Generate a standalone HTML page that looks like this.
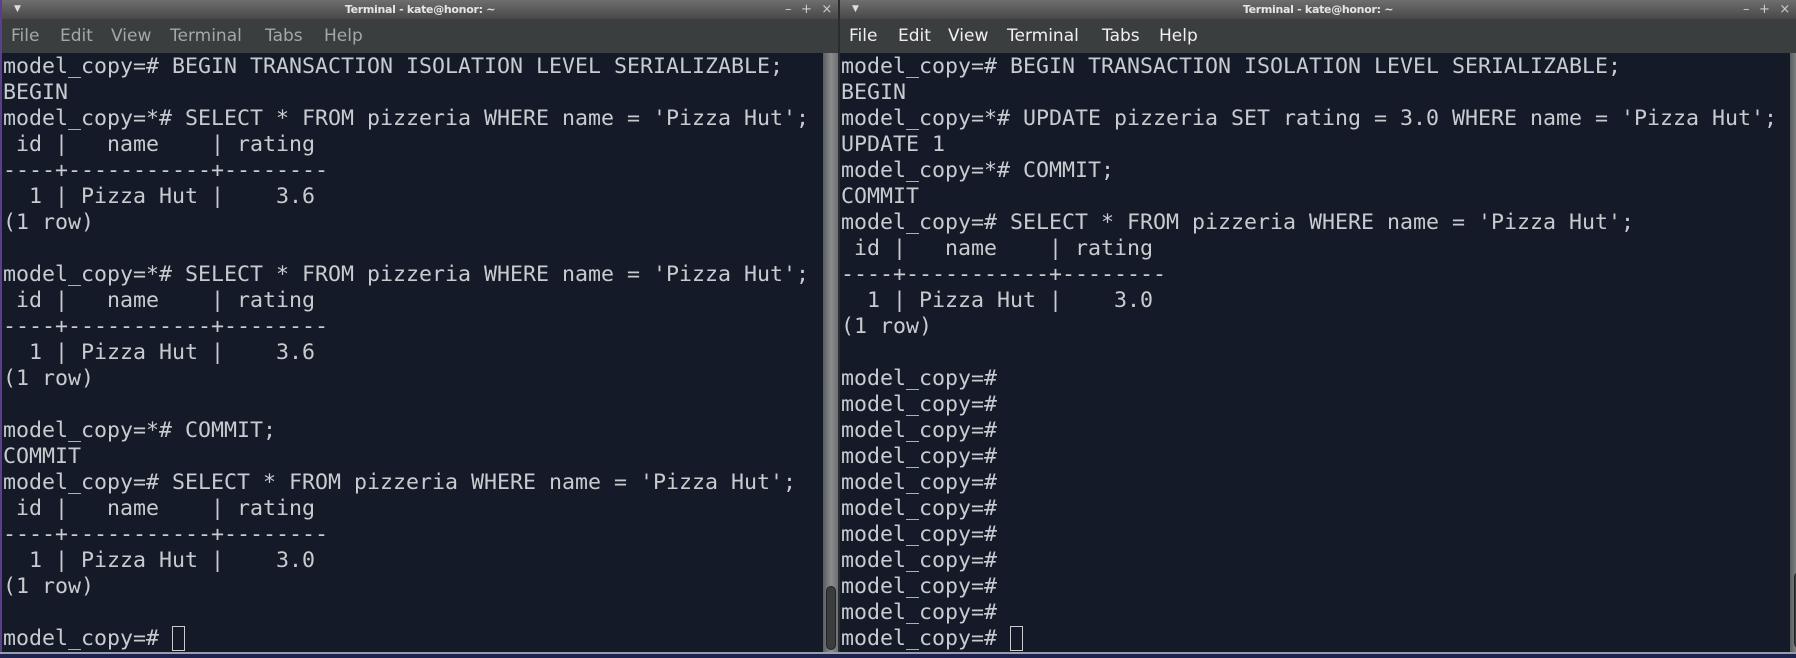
<!DOCTYPE html>
<html><head><meta charset="utf-8"><style>
*{margin:0;padding:0;box-sizing:border-box}
body{width:1796px;height:658px;overflow:hidden;background:#1c2350;position:relative;font-family:"DejaVu Sans","Liberation Sans",sans-serif}
.win{position:absolute;top:0;height:652px;background:#141a27;overflow:hidden}
.title{position:absolute;left:0;right:0;top:0;height:19px;background:linear-gradient(#6e6e6e,#484848);color:#e6e6e6;font-size:11px;font-weight:bold;text-align:center;line-height:19px;letter-spacing:-0.3px}
.title .arr{position:absolute;left:12px;top:0;font-size:9px;color:#ddd}
.title .btns{position:absolute;right:6px;top:0;font-size:13px;font-weight:normal;color:#ccc;word-spacing:6px}
.menu{position:absolute;left:0;right:0;top:19px;height:34px;background:#3b3e3f;font-size:17px;line-height:34px}
.menu span{position:absolute;top:0}
.term{position:absolute;top:54px;font-family:"DejaVu Sans Mono","Liberation Mono",monospace;font-size:21.6px;line-height:26px;color:#c8ccd0;white-space:pre}
.cur{display:inline-block;width:13px;height:25px;border:1.5px solid #c8ccd0;vertical-align:top;margin-top:0}
.sb{position:absolute;top:53px;bottom:0;width:16px;background:linear-gradient(90deg,#5a5d5e,#8a8c8d,#6a6c6d)}
.thumb{position:absolute;width:10px;background:#3a3d3e;border:1px solid #222;border-radius:5px}
</style></head><body>
<div class="win" style="left:0;width:838px;border-left:2px solid #5a3f8a">
 <div class="title"><span class="arr">▼</span>Terminal - kate@honor: ~<span class="btns">– + ×</span></div>
 <div class="menu" style="color:#a4a8aa"><span style="left:9px">File</span><span style="left:58px">Edit</span><span style="left:109px">View</span><span style="left:168px">Terminal</span><span style="left:263px">Tabs</span><span style="left:322px">Help</span></div>
 <div class="term" style="left:1px">model_copy=# BEGIN TRANSACTION ISOLATION LEVEL SERIALIZABLE;
BEGIN
model_copy=*# SELECT * FROM pizzeria WHERE name = 'Pizza Hut';
 id |   name    | rating
----+-----------+--------
  1 | Pizza Hut |    3.6
(1 row)

model_copy=*# SELECT * FROM pizzeria WHERE name = 'Pizza Hut';
 id |   name    | rating
----+-----------+--------
  1 | Pizza Hut |    3.6
(1 row)

model_copy=*# COMMIT;
COMMIT
model_copy=# SELECT * FROM pizzeria WHERE name = 'Pizza Hut';
 id |   name    | rating
----+-----------+--------
  1 | Pizza Hut |    3.0
(1 row)

model_copy=# <span class="cur"></span></div>
 <div class="sb" style="left:821px"><div class="thumb" style="left:3px;top:533px;height:64px"></div></div>
</div>
<div class="win" style="left:838px;width:958px;border-left:2px solid #2a2d30">
 <div class="title"><span class="arr">▼</span>Terminal - kate@honor: ~<span class="btns">– + ×</span></div>
 <div class="menu" style="color:#f0f0f0"><span style="left:9px">File</span><span style="left:58px">Edit</span><span style="left:108px">View</span><span style="left:167px">Terminal</span><span style="left:262px">Tabs</span><span style="left:319px">Help</span></div>
 <div class="term" style="left:1px">model_copy=# BEGIN TRANSACTION ISOLATION LEVEL SERIALIZABLE;
BEGIN
model_copy=*# UPDATE pizzeria SET rating = 3.0 WHERE name = 'Pizza Hut';
UPDATE 1
model_copy=*# COMMIT;
COMMIT
model_copy=# SELECT * FROM pizzeria WHERE name = 'Pizza Hut';
 id |   name    | rating
----+-----------+--------
  1 | Pizza Hut |    3.0
(1 row)

model_copy=#
model_copy=#
model_copy=#
model_copy=#
model_copy=#
model_copy=#
model_copy=#
model_copy=#
model_copy=#
model_copy=#
model_copy=# <span class="cur"></span></div>
 <div class="sb" style="left:950px"><div class="thumb" style="left:4px;top:519px;height:76px"></div></div>
</div>
<div style="position:absolute;left:0;top:652px;width:1796px;height:2px;background:#9a9ca8"></div>
</body></html>
